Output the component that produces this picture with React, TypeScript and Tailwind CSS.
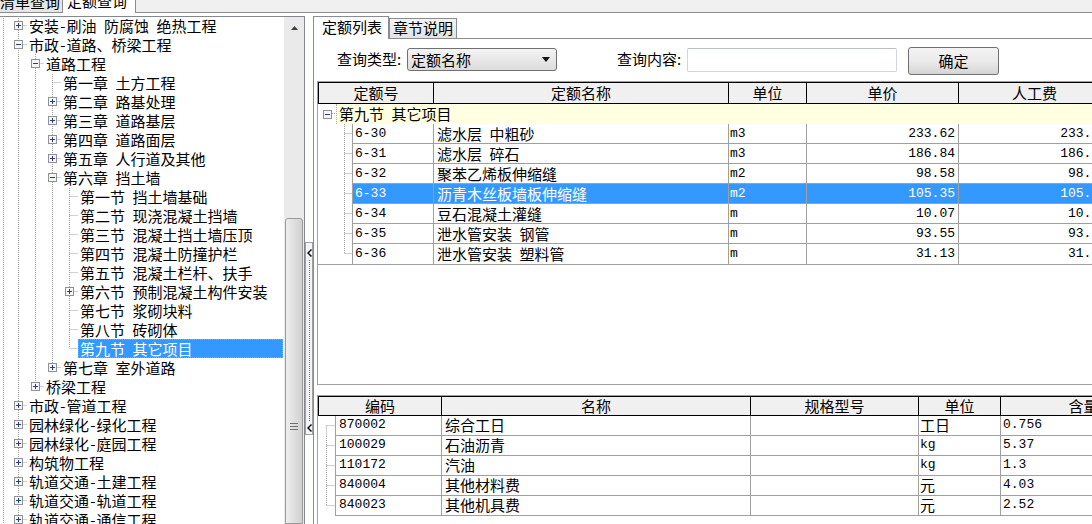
import React from "react";

const CJK = "font-['Noto_Sans_CJK_SC',sans-serif]";
const MONO = "font-['Liberation_Mono',monospace] text-[13px]";

type Node = { lv: number; label: string; box?: "+" | "-"; sel?: boolean };

const tree: Node[] = [
  { lv: 0, label: "安装-刷油 防腐蚀 绝热工程", box: "+" },
  { lv: 0, label: "市政-道路、桥梁工程", box: "-" },
  { lv: 1, label: "道路工程", box: "-" },
  { lv: 2, label: "第一章 土方工程" },
  { lv: 2, label: "第二章 路基处理", box: "+" },
  { lv: 2, label: "第三章 道路基层", box: "+" },
  { lv: 2, label: "第四章 道路面层", box: "+" },
  { lv: 2, label: "第五章 人行道及其他", box: "+" },
  { lv: 2, label: "第六章 挡土墙", box: "-" },
  { lv: 3, label: "第一节 挡土墙基础" },
  { lv: 3, label: "第二节 现浇混凝土挡墙" },
  { lv: 3, label: "第三节 混凝土挡土墙压顶" },
  { lv: 3, label: "第四节 混凝土防撞护栏" },
  { lv: 3, label: "第五节 混凝土栏杆、扶手" },
  { lv: 3, label: "第六节 预制混凝土构件安装", box: "+" },
  { lv: 3, label: "第七节 浆砌块料" },
  { lv: 3, label: "第八节 砖砌体" },
  { lv: 3, label: "第九节 其它项目", sel: true },
  { lv: 2, label: "第七章 室外道路", box: "+" },
  { lv: 1, label: "桥梁工程", box: "+" },
  { lv: 0, label: "市政-管道工程", box: "+" },
  { lv: 0, label: "园林绿化-绿化工程", box: "+" },
  { lv: 0, label: "园林绿化-庭园工程", box: "+" },
  { lv: 0, label: "构筑物工程", box: "+" },
  { lv: 0, label: "轨道交通-土建工程", box: "+" },
  { lv: 0, label: "轨道交通-轨道工程", box: "+" },
  { lv: 0, label: "轨道交通-通信工程", box: "+" },
];

const quotas = [
  ["6-30", "滤水层 中粗砂", "m3", "233.62", "233.62"],
  ["6-31", "滤水层 碎石", "m3", "186.84", "186.84"],
  ["6-32", "聚苯乙烯板伸缩缝", "m2", "98.58", "98.58"],
  ["6-33", "沥青木丝板墙板伸缩缝", "m2", "105.35", "105.35"],
  ["6-34", "豆石混凝土灌缝", "m", "10.07", "10.07"],
  ["6-35", "泄水管安装 钢管", "m", "93.55", "93.55"],
  ["6-36", "泄水管安装 塑料管", "m", "31.13", "31.13"],
];

const materials = [
  ["870002", "综合工日", "", "工日", "0.756"],
  ["100029", "石油沥青", "", "kg", "5.37"],
  ["110172", "汽油", "", "kg", "1.3"],
  ["840004", "其他材料费", "", "元", "4.03"],
  ["840023", "其他机具费", "", "元", "2.52"],
];

// spaces and hyphens were half-width in the original font
function Txt({ s }: { s: string }) {
  return (
    <>
      {s.split(/([- ])/).map((p, i) =>
        p === "-" || p === " " ? (
          <span key={i} className="inline-block w-[7.5px] text-center">
            {p === "-" ? "-" : "\u00a0"}
          </span>
        ) : (
          <React.Fragment key={i}>{p}</React.Fragment>
        )
      )}
    </>
  );
}

const ascii = (s: string) => /^[\x20-\x7e]+$/.test(s);

function hasNext(i: number) {
  const lv = tree[i].lv;
  if (lv === 0) return true;
  for (let j = i + 1; j < tree.length; j++) {
    if (tree[j].lv < lv) return false;
    if (tree[j].lv === lv) return true;
  }
  return false;
}

function ancestor(i: number, lv: number) {
  for (let j = i - 1; j >= 0; j--) if (tree[j].lv === lv) return j;
  return 0;
}

function Box({ cx, cy, open }: { cx: number; cy: number; open: boolean }) {
  return (
    <g>
      <rect x={cx - 3.5} y={cy - 3.5} width={8} height={8} fill="#f6f6f6" stroke="#919191" />
      <line x1={cx - 2} x2={cx + 3} y1={cy + 0.5} y2={cy + 0.5} stroke="#22408c" />
      {!open && <line x1={cx + 0.5} x2={cx + 0.5} y1={cy - 2} y2={cy + 3} stroke="#22408c" />}
    </g>
  );
}

function TreeRow({ i }: { i: number }) {
  const n = tree[i];
  const cx = (lv: number) => 18 + 17 * lv;
  const w = cx(n.lv) + 9;
  const x = cx(n.lv) + 0.5;
  const guides: number[] = [];
  for (let a = 0; a < n.lv; a++) if (hasNext(ancestor(i, a))) guides.push(cx(a) + 0.5);
  return (
    <div className="flex h-[19px] items-center whitespace-nowrap">
      <svg width={w} height={19} className="shrink-0">
        <g stroke="#a0a0a0" strokeDasharray="1 1" strokeDashoffset={i % 2}>
          <line x1={3.5} x2={3.5} y1={0} y2={19} />
          {guides.map((g) => (
            <line key={g} x1={g} x2={g} y1={0} y2={19} />
          ))}
          <line x1={x} x2={x} y1={0} y2={hasNext(i) ? 19 : 9.5} />
          <line x1={x} x2={w} y1={9.5} y2={9.5} />
        </g>
        {n.box && <Box cx={cx(n.lv)} cy={9} open={n.box === "-"} />}
      </svg>
      {n.sel ? (
        <span className="flex-1 self-stretch mr-[1px] border border-dotted border-[#d19a55] bg-[#3399ff] pl-[1px] leading-[17px] text-white">
          <Txt s={n.label} />
        </span>
      ) : (
        <span className="pl-[2px] leading-[18px]">
          <Txt s={n.label} />
        </span>
      )}
    </div>
  );
}

function Scrollbar() {
  return (
    <div className="w-[20px] shrink-0 bg-[#eaeaea] flex flex-col">
      <div className="h-[20px] shrink-0 flex items-center justify-center pt-[2px]">
        <svg width="7" height="4">
          <polygon points="3.5,0 7,4 0,4" fill="#404040" />
        </svg>
      </div>
      <div className="h-[181px] shrink-0" />
      <div className="flex-1 mx-[1px] rounded-t-[3px] border border-[#9b9b9b] bg-linear-to-r from-[#eeeeee] to-[#d0d0d0] flex flex-col items-center">
        <div className="mt-[204px] flex flex-col gap-[2px]">
          <div className="w-[8px] h-px bg-[#707070]" />
          <div className="w-[8px] h-px bg-[#707070]" />
          <div className="w-[8px] h-px bg-[#707070]" />
        </div>
      </div>
    </div>
  );
}

function Chev() {
  return (
    <svg width="5" height="8" className="shrink-0">
      <polyline points="4.5,0.5 1,4 4.5,7.5" fill="none" stroke="#000" strokeWidth="1.4" />
    </svg>
  );
}

function Splitter() {
  return (
    <div className="w-[8px] shrink-0 flex flex-col bg-white">
      <div className="h-[226px] shrink-0" />
      <div className="h-[193px] shrink-0 border border-[#a0a0a0] bg-[#f4f4f4] flex flex-col items-center pt-[6px] pb-[2px]">
        <Chev />
        <div className="flex-1 w-0 my-[3px] border-l border-dotted border-[#3d7fd9]" />
        <Chev />
      </div>
    </div>
  );
}

function QueryRow() {
  return (
    <div className="h-[42px] shrink-0 flex items-start pt-[8px] whitespace-nowrap">
      <div className="ml-[23px] w-[68px] h-[23px] leading-[23px]">查询类型:</div>
      <div className="ml-[2px] w-[150px] h-[23px] mt-[1px] flex items-center rounded-[3px] border border-[#707070] bg-linear-to-b from-[#f4f4f4] to-[#dcdcdc] pl-[3px] pr-[6px]">
        <span className="leading-[19px]">定额名称</span>
        <svg width="8" height="5" className="ml-auto">
          <polygon points="0,0 8,0 4,5" fill="#111" />
        </svg>
      </div>
      <div className="ml-[60px] w-[68px] h-[23px] leading-[23px]">查询内容:</div>
      <div className="ml-[2px] w-[210px] h-[24px] mt-[1px] rounded-[2px] border border-[#cfd6df] border-t-[#b9c0c9] bg-white" />
      <div className="ml-[11px] w-[91px] h-[28px] flex items-center justify-center rounded-[3px] border border-[#707070] bg-linear-to-b from-[#f3f3f3] via-[#ebebeb] to-[#d5d5d5]">
        确定
      </div>
    </div>
  );
}

function UpperGrid() {
  const head = ["定额号", "定额名称", "单位", "单价", "人工费"];
  return (
    <div className="ml-[3px] h-[304px] shrink-0 overflow-hidden border-l border-t border-b border-[#a0a0a0]">
      <div className="grid w-max grid-cols-[116px_295px_78px_152px_152px] border-t border-b border-black bg-[#f0f0f0]">
        {head.map((h, i) => (
          <div key={h} className={`h-[20px] leading-[19px] text-center border-r border-black ${i === 0 ? "border-l" : ""}`}>
            {h}
          </div>
        ))}
      </div>
      <div className="flex h-[20px] w-max">
        <svg width={18} height={20} className="shrink-0">
          <line x1={14} x2={18} y1={9.5} y2={9.5} stroke="#a0a0a0" strokeDasharray="1 1" />
          <Box cx={9} cy={10} open />
        </svg>
        <div className="w-[775px] border-l border-dotted border-[#b0b0b0] bg-[#ffffe1] pl-[2px] leading-[19px] whitespace-nowrap">
          <Txt s="第九节 其它项目" />
        </div>
      </div>
      {quotas.map((r, i) => {
        const last = i === quotas.length - 1;
        const sel = r[0] === "6-33";
        const cell = `border-r border-[#a0a0a0] leading-[19px] whitespace-nowrap overflow-hidden ${last ? "" : "border-b"} ${sel ? "bg-[#3399ff] text-white" : ""}`;
        return (
          <div key={r[0]} className="grid h-[20px] w-max grid-cols-[34px_82px_295px_78px_152px_152px]">
            <svg width={34} height={20}>
              <g stroke="#a0a0a0" strokeDasharray="1 1">
                <line x1={26.5} x2={26.5} y1={0} y2={last ? 9.5 : 20} />
                <line x1={26.5} x2={34} y1={9.5} y2={9.5} />
              </g>
            </svg>
            <div className={`${cell} border-l pl-[2px] ${MONO}`}>{r[0]}</div>
            <div className={`${cell} pl-[3px] leading-[18px]`}>
              <Txt s={r[1]} />
            </div>
            <div className={`${cell} pl-[1px] ${MONO}`}>{r[2]}</div>
            <div className={`${cell} text-right pr-[3px] ${MONO}`}>{r[3]}</div>
            <div className={`${cell} text-right pr-[3px] ${MONO}`}>{r[4]}</div>
          </div>
        );
      })}
      <div className="h-px w-[793px] bg-[#a0a0a0]" />
    </div>
  );
}

function LowerGrid() {
  const head = ["编码", "名称", "规格型号", "单位", "含量"];
  return (
    <div className="ml-[3px] mt-[10px] flex-1 min-h-0 overflow-hidden border-l border-t border-[#a0a0a0]">
      <div className="grid w-max grid-cols-[124px_309px_168px_82px_166px] border-t border-b border-black bg-[#f0f0f0]">
        {head.map((h, i) => (
          <div key={h} className={`h-[18px] leading-[18px] text-center border-r border-black ${i === 0 ? "border-l" : ""}`}>
            {h}
          </div>
        ))}
      </div>
      {materials.map((r, i) => {
        const first = i === 0;
        const last = i === materials.length - 1;
        const cell = "border-r border-b border-[#a0a0a0] leading-[18px] whitespace-nowrap overflow-hidden";
        return (
          <div key={r[0]} className="grid h-[20px] w-max grid-cols-[17px_107px_309px_168px_82px_166px]">
            <svg width={17} height={20}>
              <g stroke="#a0a0a0" strokeDasharray="1 1">
                <line x1={8.5} x2={8.5} y1={first ? 9.5 : 0} y2={last ? 10 : 20} />
                <line x1={8.5} x2={17} y1={9.5} y2={9.5} />
              </g>
            </svg>
            <div className={`${cell} border-l pl-[3px] ${MONO}`}>{r[0]}</div>
            <div className={`${cell} pl-[3px]`}>{r[1]}</div>
            <div className={cell}>{r[2]}</div>
            <div className={`${cell} pl-[1px] ${ascii(r[3]) ? MONO : ""}`}>{r[3]}</div>
            <div className={`${cell} pl-[2px] ${MONO}`}>{r[4]}</div>
          </div>
        );
      })}
    </div>
  );
}

export default function App() {
  return (
    <div className={`w-[1092px] h-[524px] overflow-hidden bg-white text-black text-[15px] flex flex-col ${CJK}`}>
      {/* outer tabs, scrolled so only the lower half shows */}
      <div className="h-[13px] shrink-0 flex items-end overflow-hidden bg-[#f0f0f0]">
        <div className="-ml-[3px] w-[66px] h-[22px] shrink-0 border border-[#8c8c8c] bg-[#e6e6e6] pl-[2px] leading-[19px] whitespace-nowrap">
          清单查询
        </div>
        <div className="w-[73px] h-[22px] shrink-0 border-r border-[#8c8c8c] bg-white pl-[4px] leading-[19px] whitespace-nowrap">
          定额查询
        </div>
        <div className="flex-1 h-px bg-[#8c8c8c]" />
      </div>

      <div className="flex-1 min-h-0 flex pt-[3px]">
        <div className="w-[305px] shrink-0 flex border-t border-r border-[#828790]">
          <div className="w-[284px] shrink-0 overflow-hidden -mt-px">
            {tree.map((_, i) => (
              <TreeRow key={i} i={i} />
            ))}
          </div>
          <Scrollbar />
        </div>

        <Splitter />

        <div className="flex-1 min-w-0 flex flex-col overflow-hidden">
          <div className="h-[23px] shrink-0 flex items-end whitespace-nowrap">
            <div className="w-[76px] h-[23px] shrink-0 border-t border-l border-r border-[#898c95] bg-white pl-[8px] leading-[19px]">
              定额列表
            </div>
            <div className="w-[68px] h-[21px] shrink-0 border border-[#898c95] bg-linear-to-b from-[#f4f4f4] to-[#e2e2e2] pl-[3px] leading-[18px]">
              章节说明
            </div>
            <div className="flex-1 h-px bg-[#898c95]" />
          </div>
          <div className="flex-1 min-h-0 flex flex-col border-l border-[#898c95] bg-white">
            <QueryRow />
            <UpperGrid />
            <LowerGrid />
          </div>
        </div>
      </div>
    </div>
  );
}
